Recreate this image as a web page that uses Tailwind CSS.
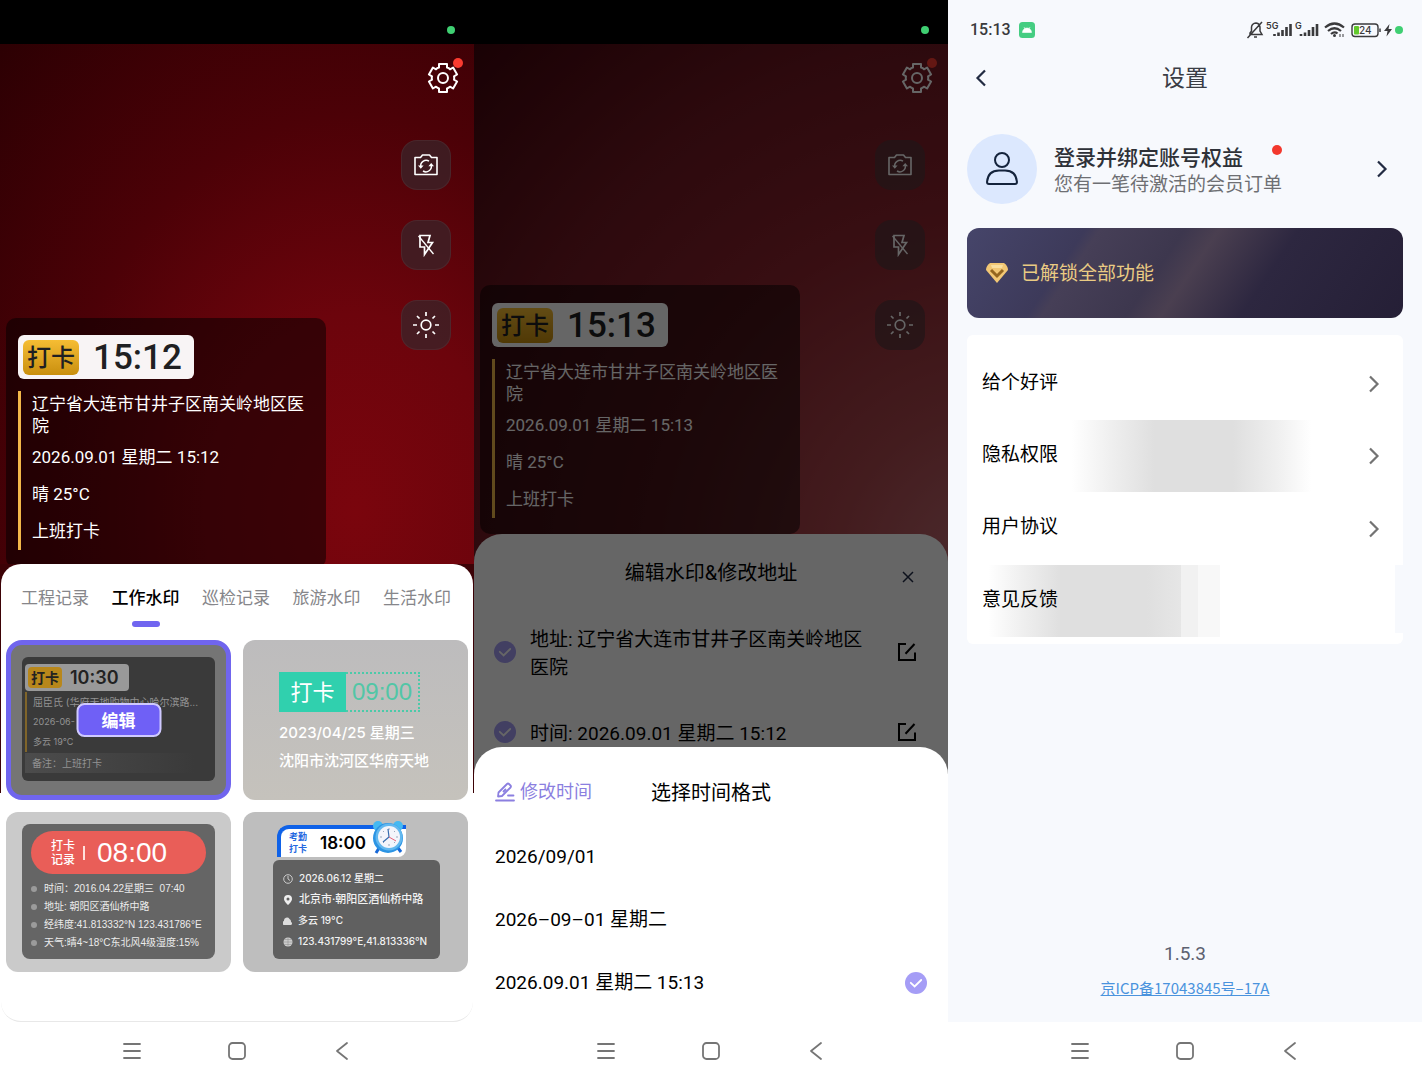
<!DOCTYPE html>
<html lang="zh-CN">

<head>
    <meta charset="utf-8" />
    <meta content="width=device-width, initial-scale=1" name="viewport" />
    <title>打卡水印相机</title>
    <script src="https://cdn.jsdelivr.net/npm/@tailwindcss/browser@4"></script>
</head>

<body class="bg-white font-['Roboto','Noto_Sans_CJK_SC',sans-serif] text-black">
    <!-- Shared icons -->
    <svg class="hidden" aria-hidden="true">
        <symbol id="gear" viewBox="-16 -16 32 32">
            <path d="M-4-14H4V-10.500Q6-10 7-8.700L10.100-10.500 14.100-3.500 11-1.700Q11.500 0 11 1.700L14.100 3.500 10.100 10.500 7 8.700Q6 10 4 10.500V14H-4V10.500Q-6 10-7 8.700L-10.100 10.500-14.100 3.500-11 1.700Q-11.500 0-11-1.700L-14.100-3.500-10.100-10.500-7-8.700Q-6-10-4-10.500Z" fill="none" stroke="currentColor" stroke-width="2" stroke-linejoin="round" />
            <circle r="5" fill="none" stroke="currentColor" stroke-width="2" />
        </symbol>
        <symbol id="flip" viewBox="0 0 26 24">
            <path d="M2 4.500H7.500L9.500 2H16.500L18.500 4.500H24V21.500H2Z" fill="none" stroke="currentColor" stroke-width="1.600" stroke-linejoin="round" />
            <path d="M16 8.200A5.500 5.500 0 0 0 7.800 14M10 18A5.500 5.500 0 0 0 18.200 12" fill="none" stroke="currentColor" stroke-width="1.500" />
            <path d="M5 12.500H10.600L7.800 15.800ZM15.400 13.200H21L18.200 10Z" fill="currentColor" />
        </symbol>
        <symbol id="flash-off" viewBox="0 0 20 24">
            <path d="M4 2.500H14L12 9.500H16.500L8.500 21.500V14H4Z" fill="none" stroke="currentColor" stroke-width="1.700" />
            <path d="M2.500 3L17.500 21" stroke="currentColor" stroke-width="1.300" />
        </symbol>
        <symbol id="sun" viewBox="-14 -14 28 28">
            <circle r="4.800" fill="none" stroke="currentColor" stroke-width="1.700" />
            <path d="M0-13V-9M0 13V9M-13 0H-9M13 0H9M-9-9L-6.500-6.500M9 9L6.500 6.500M9-9L6.500-6.500M-9 9L-6.500 6.500" stroke="currentColor" stroke-width="1.700" />
        </symbol>
        <symbol id="check" viewBox="0 0 22 22">
            <circle cx="11" cy="11" r="11" fill="#a59df6" />
            <path d="M5.800 10.800L9.600 14.400 16.200 8" fill="none" stroke="#fff" stroke-width="1.800" stroke-linecap="round" />
        </symbol>
        <symbol id="edit" viewBox="0 0 20 20">
            <path d="M9 2H2V18H18V10.500" fill="none" stroke="currentColor" stroke-width="2" />
            <path d="M8.500 11.800L17.500 2" stroke="currentColor" stroke-width="2" />
        </symbol>
        <symbol id="chevron" viewBox="0 0 12 20">
            <path d="M2 2.500L9.500 10 2 17.500" fill="none" stroke="currentColor" stroke-width="2.200" />
        </symbol>
        <symbol id="menu" viewBox="0 0 20 20">
            <path d="M2 3H18M2 10H18M2 17H18" stroke="currentColor" stroke-width="1.800" stroke-linecap="round" />
        </symbol>
        <symbol id="home" viewBox="0 0 20 20">
            <rect x="2" y="2" width="16" height="16" rx="3.500" fill="none" stroke="currentColor" stroke-width="1.800" />
        </symbol>
        <symbol id="back" viewBox="0 0 20 20">
            <path d="M15 2L5 10 15 18" fill="none" stroke="currentColor" stroke-width="1.800" stroke-linecap="round" stroke-linejoin="round" />
        </symbol>
    </svg>

    <main class="grid grid-cols-1 md:grid-cols-3 min-h-screen">

        <!-- Camera screen -->
        <section class="flex flex-col min-h-screen min-w-0">
            <div class="h-11 bg-black flex items-end justify-end pr-[19px] pb-[10px]">
                <span class="size-2 rounded-full bg-[#3fcf72]"></span>
            </div>
            <div class="flex-1 flex justify-between bg-[radial-gradient(ellipse_at_75%_90%,#7a050d_0%,#6c040c_30%,#4c0107_60%,#2c0003_100%)]">
                <div class="w-80 self-end ml-[6px] -mb-1 rounded-[10px] bg-black/50 px-3 pt-[17px] pb-[18px] text-white">
                    <div class="w-fit h-11 flex items-center rounded-md bg-[#f8f4f5] pl-[5px] pr-3 text-[#1f1f22]">
                        <span class="rounded-md bg-linear-to-b from-[#f6bd33] to-[#c98f0c] px-1 pt-px text-2xl leading-[34px] font-medium">打卡</span>
                        <span class="pl-[14px] pt-[2px] text-[35px] leading-10 font-medium">15:12</span>
                    </div>
                    <div class="mt-3 border-l-3 border-[#f3b84a] pl-[11px] pt-[2px] text-[17px]">
                        <p class="pb-[2px] leading-[22px]">辽宁省大连市甘井子区南关岭地区医院</p>
                        <p class="leading-[37px]">2026.09.01 星期二 15:12</p>
                        <p class="leading-[37px]">晴 25°C</p>
                        <p class="leading-[37px]">上班打卡</p>
                    </div>
                </div>
                <div class="flex flex-col items-end gap-[30px] pt-[18px] pr-[23px] text-white">
                    <button aria-label="设置" class="relative -mr-2 mb-4 size-8">
                        <svg class="size-8"><use href="#gear" /></svg>
                        <span class="absolute -top-1 -right-1 size-[10px] rounded-full bg-[#fb3b30]"></span>
                    </button>
                    <button aria-label="切换镜头" class="size-[50px] rounded-2xl border border-white/5 bg-[#3a2429]/75 flex items-center justify-center">
                        <svg class="w-[26px] h-6"><use href="#flip" /></svg>
                    </button>
                    <button aria-label="闪光灯" class="size-[50px] rounded-2xl border border-white/5 bg-[#3a2429]/75 flex items-center justify-center">
                        <svg class="w-5 h-6"><use href="#flash-off" /></svg>
                    </button>
                    <button aria-label="亮度" class="size-[50px] rounded-2xl border border-white/5 bg-[#3a2429]/75 flex items-center justify-center">
                        <svg class="size-7"><use href="#sun" /></svg>
                    </button>
                </div>
            </div>

            <div class="relative bg-linear-to-b from-[#3c0206] from-50% to-white to-50%">
                <div class="mx-px rounded-[20px] border-b border-[#e8e8e8] bg-white pt-[22px] pb-[49px]">
                    <!-- Tabs -->
                    <div class="flex justify-between items-start pl-5 pr-[22px] text-[17px] leading-6 text-[#86868a]">
                        <button>工程记录</button>
                        <button class="flex flex-col items-center text-black font-medium">
                            工作水印
                            <span class="mt-[11px] h-[6px] w-7 rounded-full bg-[#7065f0]"></span>
                        </button>
                        <button>巡检记录</button>
                        <button>旅游水印</button>
                        <button>生活水印</button>
                    </div>

                    <!-- Templates -->
                    <div class="grid grid-cols-2 gap-3 mt-[13px] px-[5px]">
                        <div class="relative h-40 rounded-2xl border-[5px] border-[#7065ee] bg-[#757575] px-[11px] py-3">
                            <div class="h-[124px] rounded-md bg-[#3a3a3a] pl-[3px] pt-[7px] font-['Inter','Noto_Sans_CJK_SC',sans-serif] text-[10px] text-[#929292] overflow-hidden">
                                <div class="w-fit h-[27px] flex items-center rounded-sm bg-[#999] pl-[3px] pr-[10px] text-[#222]">
                                    <span class="rounded-sm bg-[#b8871b] px-[3px] text-sm leading-[21px] font-bold">打卡</span>
                                    <span class="pl-2 text-lg leading-6 font-semibold">10:30</span>
                                </div>
                                <div class="mt-px border-l-2 border-[#80652a] pl-[6px] leading-5 whitespace-nowrap">
                                    <p>屈臣氏 (华府天地购物中心哈尔滨路...</p>
                                    <p class="text-[9px]">2026-06-</p>
                                    <p class="text-[9px]">多云 19°C</p>
                                </div>
                                <p class="mt-px mr-5 bg-linear-to-r from-[#4c4c4c] to-[#3a3a3a] pl-[7px] leading-5">备注：上班打卡</p>
                            </div>
                            <button class="absolute left-1/2 top-1/2 -translate-1/2 h-[34px] w-[85px] rounded-lg border-2 border-[#cfc9ff] bg-[#6f60f6] pt-px text-[17px] leading-[30px] font-bold text-white">编辑</button>
                        </div>

                        <div class="h-40 rounded-xl bg-linear-to-b from-[#bdbcbd] to-[#c5c2bc] pl-9 pt-8 font-['Inter','Noto_Sans_CJK_SC',sans-serif] text-[15px] text-white font-medium">
                            <div class="flex w-fit">
                                <span class="bg-[#30d0ae] w-[67px] text-center text-[22px] leading-10 font-normal">打卡</span>
                                <span class="border-2 border-l-0 border-dotted border-[#4bcaa9] w-[74px] text-center font-['Liberation_Sans'] text-2xl leading-9 font-normal text-[#52c6a6]">09:00</span>
                            </div>
                            <p class="mt-[7px] leading-7">2023/04/25 星期三</p>
                            <p class="leading-[27px]">沈阳市沈河区华府天地</p>
                        </div>

                        <div class="h-40 rounded-xl bg-[#cacaca] px-4 py-3">
                            <div class="h-[135px] rounded-lg bg-[#656565] pt-[7px] font-['Liberation_Sans','Noto_Sans_CJK_SC',sans-serif] text-[10px] text-[#ececec]">
                                <div class="mx-[9px] h-[43px] flex items-center rounded-full bg-[#e95e58] pl-5 text-white">
                                    <span class="w-6 text-xs leading-[14px] font-medium">打卡记录</span>
                                    <span class="mx-2 h-[14px] w-[2px] bg-[#ffe0dc]"></span>
                                    <span class="pl-1 text-[28px] leading-10">08:00</span>
                                </div>
                                <ul class="mt-[6px] pl-[9px] leading-[18px] whitespace-nowrap">
                                    <li class="flex items-center gap-[7px]"><span class="size-[6px] rounded-full bg-[#9b9b9b]"></span>时间：2016.04.22星期三&nbsp; 07:40</li>
                                    <li class="flex items-center gap-[7px]"><span class="size-[6px] rounded-full bg-[#9b9b9b]"></span>地址: 朝阳区酒仙桥中路</li>
                                    <li class="flex items-center gap-[7px]"><span class="size-[6px] rounded-full bg-[#9b9b9b]"></span>经纬度:41.813332°N 123.431786°E</li>
                                    <li class="flex items-center gap-[7px]"><span class="size-[6px] rounded-full bg-[#9b9b9b]"></span>天气:晴4~18°C东北风4级湿度:15%</li>
                                </ul>
                            </div>
                        </div>

                        <div class="h-40 rounded-xl bg-[#bebebe] pl-[30px] pr-7 pt-[13px]">
                            <div class="relative ml-1 w-[129px] h-8 rounded-br-lg bg-white border-t-4 border-l-4 border-[#0f62e8] rounded-tl-xl flex items-center pl-2">
                                <span class="w-5 text-[9px] leading-3 font-bold text-[#2468e0]">考勤打卡</span>
                                <span class="pl-[11px] font-['Inter'] text-[17px] leading-6 font-semibold">18:00</span>
                                <svg class="absolute -top-[9px] right-0 w-9 h-9" viewBox="0 0 36 36">
                                    <circle cx="8" cy="6" r="5" fill="#45b9f2" />
                                    <circle cx="28" cy="6" r="5" fill="#45b9f2" />
                                    <path d="M9 28L6 33M28 28L31 32" stroke="#1668d8" stroke-width="3" />
                                    <circle cx="18" cy="18" r="15" fill="#2b94e4" />
                                    <circle cx="19" cy="17" r="13.500" fill="#62b8ef" />
                                    <circle cx="19" cy="17" r="11" fill="#f3f5fb" />
                                    <path d="M19 8V10M19 24V26M10 17H12M26 17H28M13 11L14 12M25 11L24 12M13 23L14 22M25 23L24 22" stroke="#9aa9bd" />
                                    <path d="M18 9L19 17 13 22" fill="none" stroke="#376cae" stroke-width="1.200" />
                                    <path d="M19 17L26 21" stroke="#e7627b" />
                                </svg>
                            </div>
                            <ul class="mt-[3px] h-[99px] rounded-md bg-[#606060] pl-[10px] pt-2 font-['Inter','Noto_Sans_CJK_SC',sans-serif] text-[10px] leading-[21px] text-[#f2f2f2] font-medium whitespace-nowrap">
                                <li class="flex items-center gap-[6px]">
                                    <svg class="size-[10px]" viewBox="0 0 10 10"><circle cx="5" cy="5" r="4.300" fill="none" stroke="#ccc" /><path d="M5 2V5L7 6.500" fill="none" stroke="#ccc" /></svg>
                                    2026.06.12 星期二</li>
                                <li class="flex items-center gap-[6px] text-[11px]">
                                    <svg class="size-[10px]" viewBox="0 0 10 10"><path d="M5 0A4 4 0 0 1 9 4C9 6.500 5 10 5 10S1 6.500 1 4A4 4 0 0 1 5 0ZM5 2.500A1.500 1.500 0 1 0 5 5.500A1.500 1.500 0 1 0 5 2.500Z" fill="#eee" fill-rule="evenodd" /></svg>
                                    北京市·朝阳区酒仙桥中路</li>
                                <li class="flex items-center gap-[5px]">
                                    <svg class="size-[10px]" viewBox="0 0 10 10"><path d="M1 5A3 3 0 0 1 6.500 3A3 3 0 0 1 8 6A1.600 1.600 0 0 1 8 9H2A2 2 0 0 1 1 5Z" fill="#ddd" /></svg>
                                    多云 19°C</li>
                                <li class="flex items-center gap-[5px]">
                                    <svg class="size-[10px]" viewBox="0 0 10 10"><circle cx="5" cy="5" r="4.500" fill="#ccc" /><path d="M0 5H10M5 0V10M1.500 2.500H8.500M1.500 7.500H8.500" stroke="#888" stroke-width=".5" /></svg>
                                    123.431799°E,41.813336°N</li>
                            </ul>
                        </div>
                    </div>
                </div>
            </div>

            <nav class="h-[58px] bg-white flex items-center justify-center gap-[85px] text-[#757575]">
                <button aria-label="菜单"><svg class="size-5"><use href="#menu" /></svg></button>
                <button aria-label="主页"><svg class="size-5"><use href="#home" /></svg></button>
                <button aria-label="返回"><svg class="size-5"><use href="#back" /></svg></button>
            </nav>
        </section>

        <!-- Edit watermark screen -->
        <section class="flex flex-col min-h-screen min-w-0">
            <div class="h-11 bg-black flex items-end justify-end pr-[19px] pb-[10px]">
                <span class="size-2 rounded-full bg-[#3fcf72]"></span>
            </div>
            <div class="relative flex-1 flex flex-col bg-[radial-gradient(ellipse_at_110%_72%,#c07076_0%,#a8464c_22%,#8c242e_48%,#701822_72%,#40040c_100%)]">
                <div class="flex-1 flex justify-between">
                    <div class="w-80 self-end ml-[6px] rounded-[10px] bg-black/50 px-3 pt-[18px] pb-4 text-white">
                        <div class="w-fit h-11 flex items-center rounded-md bg-white pl-[5px] pr-3 text-[#1f1f22]">
                            <span class="rounded-md bg-linear-to-b from-[#f6bd33] to-[#c98f0c] px-1 pt-px text-2xl leading-[34px] font-medium">打卡</span>
                            <span class="pl-[14px] pt-[2px] text-[35px] leading-10 font-medium">15:13</span>
                        </div>
                        <div class="mt-3 border-l-3 border-[#f3b84a] pl-[11px] pt-[2px] text-[17px]">
                            <p class="pb-[2px] leading-[22px]">辽宁省大连市甘井子区南关岭地区医院</p>
                            <p class="leading-[37px]">2026.09.01 星期二 15:13</p>
                            <p class="leading-[37px]">晴 25°C</p>
                            <p class="leading-[37px]">上班打卡</p>
                        </div>
                    </div>
                    <div class="flex flex-col items-end gap-[30px] pt-[18px] pr-[23px] text-white">
                        <button aria-label="设置" class="relative -mr-2 mb-4 size-8">
                            <svg class="size-8"><use href="#gear" /></svg>
                            <span class="absolute -top-1 -right-1 size-[10px] rounded-full bg-[#fb3b30]"></span>
                        </button>
                        <button aria-label="切换镜头" class="size-[50px] rounded-2xl bg-[#54363b]/75 flex items-center justify-center">
                            <svg class="w-[26px] h-6"><use href="#flip" /></svg>
                        </button>
                        <button aria-label="闪光灯" class="size-[50px] rounded-2xl bg-[#54363b]/75 flex items-center justify-center">
                            <svg class="w-5 h-6"><use href="#flash-off" /></svg>
                        </button>
                        <button aria-label="亮度" class="size-[50px] rounded-2xl bg-[#54363b]/75 flex items-center justify-center">
                            <svg class="size-7"><use href="#sun" /></svg>
                        </button>
                    </div>
                </div>

                <div class="rounded-t-[28px] bg-white px-5 pb-[26px]">
                    <div class="grid grid-cols-[1fr_auto_1fr] items-center h-[78px]">
                        <h2 class="col-start-2 text-xl">编辑水印&amp;修改地址</h2>
                        <button aria-label="关闭" class="justify-self-end mr-[14px] mt-2">
                            <svg class="size-3" viewBox="0 0 12 12"><path d="M1 1L11 11M11 1L1 11" stroke="#222c48" stroke-width="1.500" /></svg>
                        </button>
                    </div>
                    <div class="mt-[10px] flex flex-col gap-[34px] text-[19px] leading-7">
                        <div class="flex items-center">
                            <label class="relative flex flex-1 items-center">
                                <input type="checkbox" checked class="peer sr-only" />
                                <svg class="size-[22px] shrink-0 opacity-30 peer-checked:opacity-100"><use href="#check" /></svg>
                                <span class="pl-[14px] pr-4 pt-1">地址: 辽宁省大连市甘井子区南关岭地区医院</span>
                            </label>
                            <button aria-label="编辑地址" class="mr-[11px]"><svg class="size-5"><use href="#edit" /></svg></button>
                        </div>
                        <div class="flex items-center">
                            <label class="relative flex flex-1 items-center">
                                <input type="checkbox" checked class="peer sr-only" />
                                <svg class="size-[22px] shrink-0 opacity-30 peer-checked:opacity-100"><use href="#check" /></svg>
                                <span class="pl-[14px] pr-4 pt-1">时间: 2026.09.01 星期二 15:12</span>
                            </label>
                            <button aria-label="编辑时间" class="mr-[11px]"><svg class="size-5"><use href="#edit" /></svg></button>
                        </div>
                    </div>
                </div>
                <div class="absolute inset-0 bg-black/60"></div>
            </div>

            <!-- Time format picker -->
            <div class="relative -mt-[27px] rounded-t-[28px] bg-white px-[21px] pt-5 pb-2">
                <div class="grid grid-cols-[1fr_auto_1fr] items-center h-[50px]">
                    <button class="flex items-center gap-[5px] text-lg text-[#8b7fe0]">
                        <svg class="size-5" viewBox="0 0 20 20">
                            <path d="M1 18.500H19M13 13.500H18.500" stroke="currentColor" stroke-width="1.800" stroke-linecap="round" />
                            <path d="M3 14.500L3.500 10.500 12 2Q13 1 14 2L15.500 3.500Q16.500 4.500 15.500 5.500L7 14ZM8 10L11 7" fill="none" stroke="currentColor" stroke-width="1.800" stroke-linejoin="round" />
                        </svg>
                        修改时间
                    </button>
                    <h2 class="pt-[2px] text-xl">选择时间格式</h2>
                </div>
                <div class="pt-2 text-[19px]">
                    <label class="relative flex h-[63px] items-center justify-between">
                        <input type="radio" name="format" class="peer sr-only" />
                        <span class="pt-[2px]">2026/09/01</span>
                        <svg class="hidden size-[22px] peer-checked:block"><use href="#check" /></svg>
                    </label>
                    <label class="relative flex h-[63px] items-center justify-between">
                        <input type="radio" name="format" class="peer sr-only" />
                        <span class="pt-[2px]">2026–09–01 星期二</span>
                        <svg class="hidden size-[22px] peer-checked:block"><use href="#check" /></svg>
                    </label>
                    <label class="relative flex h-[63px] items-center justify-between">
                        <input type="radio" name="format" checked class="peer sr-only" />
                        <span class="pt-[2px]">2026.09.01 星期二 15:13</span>
                        <svg class="hidden size-[22px] peer-checked:block"><use href="#check" /></svg>
                    </label>
                </div>
            </div>

            <nav class="h-[58px] bg-white flex items-center justify-center gap-[85px] text-[#757575]">
                <button aria-label="菜单"><svg class="size-5"><use href="#menu" /></svg></button>
                <button aria-label="主页"><svg class="size-5"><use href="#home" /></svg></button>
                <button aria-label="返回"><svg class="size-5"><use href="#back" /></svg></button>
            </nav>
        </section>

        <!-- Settings screen -->
        <section class="flex flex-col min-h-screen min-w-0 bg-[#f7f9fd]">
            <div class="h-11 flex items-center justify-between pt-4 pl-[22px] pr-[18px] text-[#3a3a3c]">
                <div class="flex items-center gap-2">
                    <span class="text-base leading-5 font-medium">15:13</span>
                    <svg class="size-4" viewBox="0 0 16 16">
                        <rect width="16" height="16" rx="3.500" fill="#45cd82" />
                        <path d="M3.500 10.500A4.500 4.500 0 0 1 12.500 10.500ZM5 5L6 7M11 5L10 7" fill="#fff" stroke="#fff" stroke-width=".6" />
                    </svg>
                </div>
                <svg class="w-[158px] h-[22px] font-['Inter']" viewBox="1246 19 158 22" role="img" aria-label="状态栏">
                    <path d="M1250 34.500V33L1251.500 31V27Q1252 23.500 1256 23Q1260 23.500 1260 27.500V31L1262 34.500ZM1254 37H1257M1247.500 38L1262 22" fill="none" stroke="#3a3a3c" stroke-width="1.500" />
                    <text x="1266" y="29" font-size="9" font-weight="600" fill="#3a3a3c">5G</text>
                    <path d="M1274.500 36V34M1278.500 36V32.500M1282.500 36V30M1286.500 36V27M1290.500 36V24" stroke="#3a3a3c" stroke-width="2.600" />
                    <text x="1295" y="29" font-size="9" font-weight="600" fill="#3a3a3c">G</text>
                    <path d="M1301 36V34M1305 36V32.500M1309 36V30M1313 36V27M1317 36V24" stroke="#3a3a3c" stroke-width="2.600" />
                    <path d="M1325 27.500Q1334.500 19.500 1344 27.500M1328 31Q1334.500 25.500 1341 31M1331 34Q1334.500 31 1337.500 33.500" fill="none" stroke="#3a3a3c" stroke-width="2.200" />
                    <circle cx="1334.500" cy="35.500" r="1.500" fill="#3a3a3c" />
                    <path d="M1340 37V34M1343 34V37" stroke="#3a3a3c" />
                    <rect x="1352" y="24" width="26" height="12.500" rx="3" fill="none" stroke="#3a3a3c" stroke-width="1.400" />
                    <rect x="1354" y="26" width="5" height="8.500" rx="1" fill="#62c92c" />
                    <path d="M1380 28.500V32" stroke="#3a3a3c" stroke-width="1.500" />
                    <text x="1359" y="34" font-size="10" font-weight="500" fill="#3a3a3c">24</text>
                    <path d="M1389.500 24L1384 31H1387.500L1386.500 36.500 1392 29H1388.500Z" fill="#3a3a3c" />
                    <circle cx="1399" cy="30" r="4" fill="#3fcf72" />
                </svg>
            </div>

            <header class="grid grid-cols-[1fr_auto_1fr] items-center h-[68px] px-[27px] text-[#222b42]">
                <button aria-label="返回" class="justify-self-start"><svg class="w-3 h-5 rotate-180"><use href="#chevron" /></svg></button>
                <h1 class="pt-[2px] text-[23px] text-[#3a3d45]">设置</h1>
            </header>

            <div class="flex flex-col px-[19px] pt-[22px]">
                <a href="#login" class="flex items-center">
                    <span class="size-[70px] rounded-full bg-[#dce8fe] flex items-center justify-center">
                        <svg class="w-8 h-9" viewBox="0 0 32 36" fill="none" stroke="#14233c" stroke-width="2">
                            <circle cx="16" cy="9" r="7" />
                            <path d="M3 33Q1 33 1 31Q2 19.500 13 19.500H19Q30 19.500 31 31Q31 33 29 33Z" />
                        </svg>
                    </span>
                    <span class="relative pl-[17px] pt-[3px]">
                        <span class="block text-[21px] leading-7 font-medium text-[#2e3138]">登录并绑定账号权益</span>
                        <span class="block text-[19px] leading-[26px] text-[#6e6f73]">您有一笔待激活的会员订单</span>
                        <span class="absolute top-1 right-0 size-[10px] rounded-full bg-[#f3382d]"></span>
                    </span>
                    <svg class="ml-auto mr-[15px] w-3 h-5 text-[#222b42]"><use href="#chevron" /></svg>
                </a>

                <div class="mt-6 h-[90px] flex items-center gap-[13px] rounded-xl bg-[linear-gradient(124deg,#46456a_0%,#3d3a5a_24%,#463f57_27%,#3d374e_44%,#4a3f50_51%,#2d2740_67%,#251f36_100%)] pl-[19px]">
                    <svg class="w-[22px] h-5" viewBox="0 0 22 20">
                        <path d="M4 0H18Q22 3 22 7L11 20 0 7Q0 3 4 0Z" fill="#f2c774" />
                        <path d="M5 2H17L16 5H6Z" fill="#fadf9e" />
                        <path d="M5 7L11 13 17 7" fill="none" stroke="#94661f" stroke-width="3" />
                    </svg>
                    <span class="pt-[3px] text-[19px] text-[#eacb83]">已解锁全部功能</span>
                </div>

                <ul class="mt-[17px] rounded-md bg-white pt-[13px] pb-[7px] text-[19px]">
                    <li>
                        <a href="#rate" class="flex h-[72px] items-center justify-between pl-[15px] pr-[23px]">
                            <span class="pb-[2px]">给个好评</span>
                            <svg class="w-3 h-5 text-[#737373]"><use href="#chevron" /></svg>
                        </a>
                    </li>
                    <li>
                        <a href="#privacy" class="flex h-[72px] items-center justify-between pl-[15px] pr-[23px] bg-[linear-gradient(90deg,#fff_24%,#efefef_33%,#dfdfdf_43%,#dfdfdf_61%,#efefef_71%,#fff_79%)]">
                            <span class="pb-[2px]">隐私权限</span>
                            <svg class="w-3 h-5 text-[#737373]"><use href="#chevron" /></svg>
                        </a>
                    </li>
                    <li>
                        <a href="#terms" class="flex h-[73px] items-center justify-between pl-[15px] pr-[23px]">
                            <span class="pb-[2px]">用户协议</span>
                            <svg class="w-3 h-5 text-[#737373]"><use href="#chevron" /></svg>
                        </a>
                    </li>
                    <li class="flex">
                        <a href="#feedback" class="flex flex-1 h-[72px] items-center pl-[15px] bg-[linear-gradient(90deg,#fff_5%,#efefef_13%,#dfdfdf_22%,#dfdfdf_42%,#e6e6e6_50%,#f1f1f1_50%,#f1f1f1_54%,#f8f8f8_54%,#f8f8f8_59%,#fff_59%)]">
                            <span class="pb-[2px]">意见反馈</span>
                        </a>
                        <span class="w-2 h-[68px] bg-[#f7f9fd]"></span>
                    </li>
                </ul>
            </div>

            <footer class="mt-auto pb-[21px] text-center">
                <p class="text-[19px] leading-7 text-[#5c6170]">1.5.3</p>
                <a href="#icp" class="mt-2 inline-block font-['Noto_Sans_CJK_SC',sans-serif] text-[15px] leading-6 text-[#4a93dd] underline">京ICP备17043845号–17A</a>
            </footer>

            <nav class="h-[58px] bg-white flex items-center justify-center gap-[85px] text-[#757575]">
                <button aria-label="菜单"><svg class="size-5"><use href="#menu" /></svg></button>
                <button aria-label="主页"><svg class="size-5"><use href="#home" /></svg></button>
                <button aria-label="返回"><svg class="size-5"><use href="#back" /></svg></button>
            </nav>
        </section>
    </main>
</body>

</html>
